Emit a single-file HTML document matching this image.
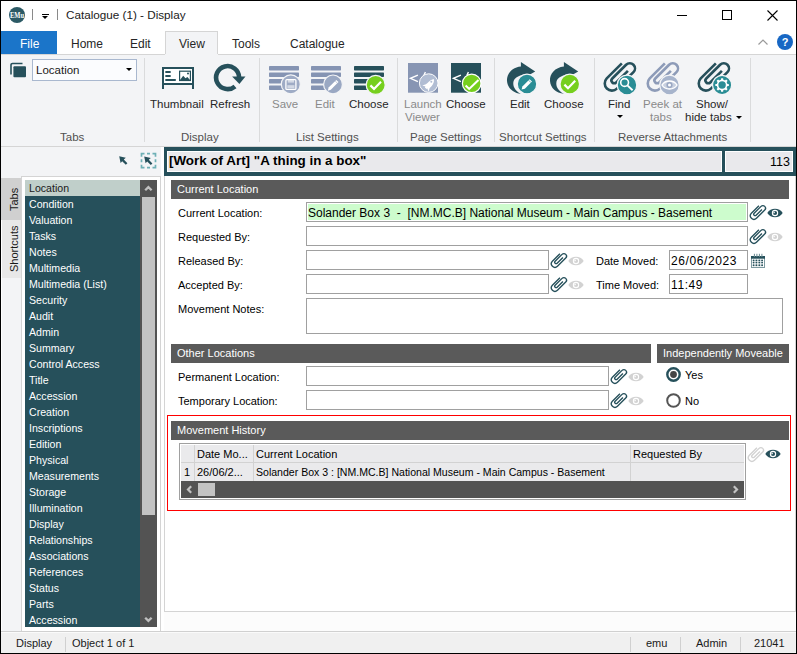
<!DOCTYPE html>
<html><head><meta charset="utf-8">
<style>
*{box-sizing:border-box;margin:0;padding:0}
html,body{width:797px;height:654px;overflow:hidden;background:#fff}
body{position:relative;font-family:"Liberation Sans",sans-serif;color:#000}
.a{position:absolute}
.t{position:absolute;white-space:nowrap;line-height:1}
#win{position:absolute;left:0;top:0;width:797px;height:654px;border:1px solid #000;}
.rb{font-size:11.5px;color:#262626}
.gl{font-size:11.5px;color:#505050}
.dis{color:#8a8a8a}
.sep{position:absolute;width:1px;background:#dadbdc;top:58px;height:84px}
.lst div{height:16px;line-height:16px;padding-left:4px;font-size:10.6px;color:#fff;white-space:nowrap}
.hdr{position:absolute;background:#5a5a5a;color:#fff;font-size:11px;height:19px;line-height:19px;padding-left:6px;white-space:nowrap}
.lbl{position:absolute;font-size:11px;white-space:nowrap;line-height:1;color:#000}
.inp{position:absolute;border:1px solid #a0a0a0;background:#fff;height:20px}
.inp span{position:absolute;left:1px;top:4px;font-size:12px;white-space:nowrap;line-height:1}
</style></head><body>
<div id="win"></div>

<svg width="0" height="0" style="position:absolute">
<defs>
<symbol id="clip" viewBox="0 0 40 40"><path d="M21.85 5.3L6.75 20.41A7.2 7.2 0 0 0 16.93 30.59L33.45 14.08A5.2 5.2 0 0 0 26.09 6.72L12.29 20.52A2.8 2.8 0 0 0 16.25 24.48L27.9 12.8" fill="none" stroke="currentColor" stroke-width="2.7" stroke-linecap="butt"/></symbol>
<symbol id="clips" viewBox="0 0 40 40"><path d="M21.85 5.3L6.75 20.41A7.2 7.2 0 0 0 16.93 30.59L33.45 14.08A5.2 5.2 0 0 0 26.09 6.72L12.29 20.52A2.8 2.8 0 0 0 16.25 24.48L27.9 12.8" fill="none" stroke="currentColor" stroke-width="2.6" stroke-linecap="butt"/></symbol>
<symbol id="eye" viewBox="0 0 16 10"><path d="M0.3 5C3.5 -0.6 12.5 -0.6 15.7 5C12.5 10.6 3.5 10.6 0.3 5Z" fill="currentColor"/><circle cx="8" cy="5" r="3.2" fill="#fff"/><circle cx="8" cy="5" r="2.1" fill="currentColor"/><path d="M8 5L8 3.3A1.7 1.7 0 0 0 6.3 5Z" fill="#fff" transform="rotate(-20 8 5)"/></symbol>
<symbol id="chk" viewBox="0 0 20 20"><circle cx="10" cy="10" r="9.4" fill="#76cf1e" stroke="#fff" stroke-width="1.2"/><path d="M4.3 11.6L8 15.2L15.8 7.2" fill="none" stroke="#fff" stroke-width="2.2"/></symbol>
</defs></svg>


<!-- TITLE BAR -->
<svg class="a" style="left:9px;top:7px" width="16" height="16" viewBox="0 0 16 16"><circle cx="8" cy="8" r="8" fill="#2c5a65"/><text x="1" y="10.8" font-family="Liberation Serif" font-weight="bold" font-size="7.6" fill="#fff" textLength="14" lengthAdjust="spacingAndGlyphs">EMu</text></svg>
<div class="a" style="left:32px;top:9px;width:1px;height:11px;background:#8a8a8a"></div>
<div class="a" style="left:42px;top:14px;width:7px;height:1px;background:#000"></div>
<div class="a" style="left:42px;top:16px;width:0;height:0;border-left:3.5px solid transparent;border-right:3.5px solid transparent;border-top:3.5px solid #000"></div>
<div class="a" style="left:57px;top:9px;width:1px;height:11px;background:#8a8a8a"></div>
<div class="t" style="left:66px;top:9px;font-size:11.7px;color:#1a1a1a">Catalogue (1) - Display</div>
<div class="a" style="left:677px;top:15px;width:10px;height:1px;background:#000"></div>
<div class="a" style="left:722px;top:10px;width:10px;height:10px;border:1px solid #000"></div>
<svg class="a" style="left:767px;top:10px" width="11" height="11" viewBox="0 0 11 11"><path d="M0.5 0.5L10.5 10.5M10.5 0.5L0.5 10.5" stroke="#000" stroke-width="1.1"/></svg>

<!-- TAB ROW -->
<div class="a" style="left:1px;top:31px;width:56px;height:23px;background:#1b75c9"></div>
<div class="t" style="left:20px;top:38px;font-size:12px;color:#fff">File</div>
<div class="t" style="left:71px;top:38px;font-size:12px;color:#262626">Home</div>
<div class="t" style="left:130px;top:38px;font-size:12px;color:#262626">Edit</div>
<div class="a" style="left:165px;top:31px;width:53px;height:24px;background:#f3f4f6;border:1px solid #d5d5d5;border-bottom:none"></div>
<div class="t" style="left:179px;top:38px;font-size:12px;color:#262626">View</div>
<div class="t" style="left:232px;top:38px;font-size:12px;color:#262626">Tools</div>
<div class="t" style="left:290px;top:38px;font-size:12px;color:#262626">Catalogue</div>
<svg class="a" style="left:758px;top:39px" width="10" height="6" viewBox="0 0 10 6"><path d="M0.5 5.5L5 1L9.5 5.5" stroke="#9a9a9a" stroke-width="1.2" fill="none"/></svg>
<div class="a" style="left:777px;top:34px;width:16px;height:16px;border-radius:50%;background:#1767c4"></div>
<div class="t" style="left:777px;top:37px;width:16px;text-align:center;font-size:11px;font-weight:bold;color:#fff">?</div>

<!-- RIBBON -->
<div class="a" style="left:1px;top:54px;width:795px;height:93px;background:#f3f4f6;border-top:1px solid #d5d5d5;border-bottom:1px solid #d5d5d5"></div>
<div class="a" style="left:165px;top:54px;width:53px;height:1px;background:#f3f4f6"></div>


<!-- Tabs group -->
<svg class="a" style="left:10px;top:62px" width="17" height="17" viewBox="0 0 17 17"><path d="M1 12.5V3A1.5 1.5 0 0 1 2.5 1.5H12.5" stroke="#26505b" stroke-width="1.6" fill="none"/><rect x="3.4" y="4.3" width="12.6" height="11" rx="1" fill="#26505b"/></svg>
<div class="a" style="left:32px;top:59px;width:105px;height:22px;background:#fbfcfe;border:1px solid #a9b8cf"></div>
<div class="t" style="left:36px;top:65px;font-size:11.5px;color:#1a1a1a">Location</div>
<div class="a" style="left:126px;top:68px;width:0;height:0;border-left:3.5px solid transparent;border-right:3.5px solid transparent;border-top:3.5px solid #000"></div>
<div class="t gl" style="left:60px;top:132px">Tabs</div>
<div class="sep" style="left:144px"></div>
<!-- Display group -->
<div class="t rb" style="left:150px;top:99px">Thumbnail</div>
<div class="t rb" style="left:210px;top:99px">Refresh</div>
<div class="t gl" style="left:181px;top:132px">Display</div>
<div class="sep" style="left:259px"></div>
<!-- List settings -->
<div class="t rb dis" style="left:272px;top:99px">Save</div>
<div class="t rb dis" style="left:315px;top:99px">Edit</div>
<div class="t rb" style="left:349px;top:99px">Choose</div>
<div class="t gl" style="left:296px;top:132px">List Settings</div>
<div class="sep" style="left:397px"></div>
<!-- Page settings -->
<div class="t rb dis" style="left:404px;top:99px">Launch</div>
<div class="t rb dis" style="left:405px;top:112px">Viewer</div>
<div class="t rb" style="left:446px;top:99px">Choose</div>
<div class="t gl" style="left:410px;top:132px">Page Settings</div>
<div class="sep" style="left:494px"></div>
<!-- Shortcut settings -->
<div class="t rb" style="left:510px;top:99px">Edit</div>
<div class="t rb" style="left:544px;top:99px">Choose</div>
<div class="t gl" style="left:499px;top:132px">Shortcut Settings</div>
<div class="sep" style="left:594px"></div>
<!-- Reverse attachments -->
<div class="t rb" style="left:608px;top:99px">Find</div>
<div class="a" style="left:617px;top:115px;width:0;height:0;border-left:3px solid transparent;border-right:3px solid transparent;border-top:3px solid #000"></div>
<div class="t rb dis" style="left:643px;top:99px">Peek at</div>
<div class="t rb dis" style="left:650px;top:112px">tabs</div>
<div class="t rb" style="left:696px;top:99px">Show/</div>
<div class="t rb" style="left:685px;top:112px">hide tabs</div>
<div class="a" style="left:736px;top:116px;width:0;height:0;border-left:3px solid transparent;border-right:3px solid transparent;border-top:3px solid #000"></div>
<div class="t gl" style="left:618px;top:132px">Reverse Attachments</div>
<div class="sep" style="left:750px"></div>


<!-- ribbon icons -->
<svg class="a" style="left:162px;top:67px" width="32" height="22" viewBox="0 0 32 22"><rect x="1" y="1" width="30" height="16" fill="#fff" stroke="#26505b" stroke-width="2"/><path d="M1 17V22M31 17V22" stroke="#26505b" stroke-width="2"/><rect x="3.2" y="4.1" width="5.6" height="1.8" rx=".6" fill="#26505b"/><rect x="3.2" y="8.1" width="5.6" height="1.8" rx=".6" fill="#26505b"/><rect x="3.2" y="12" width="10.7" height="1.9" rx=".6" fill="#26505b"/><rect x="17.6" y="4.2" width="10.8" height="9.3" fill="none" stroke="#26505b" stroke-width="1.2"/><path d="M17.6 13.5L21.2 8.8L23.5 11.2L25.4 10L28.4 13.5Z" fill="#26505b"/><circle cx="26" cy="6.6" r="1" fill="#26505b"/></svg>
<svg class="a" style="left:213px;top:63px" width="33" height="29" viewBox="0 0 33 29"><path d="M22 23.4A11.5 11.5 0 1 1 26.1 14.4" fill="none" stroke="#26505b" stroke-width="4.6"/><path d="M19.1 13.6L32.5 13.6L26.4 20.9Z" fill="#26505b"/></svg>
<svg class="a" style="left:269px;top:66px" width="34" height="30" viewBox="0 0 34 30"><rect x="0" y="0" width="30" height="4.4" rx="0.7" fill="#8594b3"/><rect x="0" y="6.5" width="30" height="4.4" rx="0.7" fill="#8594b3"/><rect x="0" y="13" width="30" height="4.4" rx="0.7" fill="#8594b3"/><rect x="0" y="19.5" width="30" height="4.4" rx="0.7" fill="#8594b3"/><circle cx="21.8" cy="18.3" r="9.5" fill="#9eabc5" stroke="#f3f4f6" stroke-width="1.2"/><rect x="16.9" y="13.6" width="10" height="9.8" rx="1" fill="none" stroke="#fff" stroke-width="1.3"/><rect x="18.8" y="13.3" width="6.2" height="3.3" fill="#fff" opacity=".55"/><rect x="18.3" y="19.2" width="7.2" height="3" fill="#fff" opacity=".55"/></svg><svg class="a" style="left:311px;top:66px" width="34" height="30" viewBox="0 0 34 30"><rect x="0" y="0" width="30" height="4.4" rx="0.7" fill="#8594b3"/><rect x="0" y="6.5" width="30" height="4.4" rx="0.7" fill="#8594b3"/><rect x="0" y="13" width="30" height="4.4" rx="0.7" fill="#8594b3"/><rect x="0" y="19.5" width="30" height="4.4" rx="0.7" fill="#8594b3"/><circle cx="22" cy="18.4" r="9.4" fill="#9aa8c3" stroke="#f3f4f6" stroke-width="1.2"/><path d="M16.8 24.7L17.6 21.6L25.3 13.9L27.5 16.1L19.8 23.8Z" fill="#fff"/><path d="M24.2 15L26.4 17.2" stroke="#9aa8c3" stroke-width=".6"/></svg><svg class="a" style="left:354px;top:66px" width="34" height="30" viewBox="0 0 34 30"><rect x="0" y="0" width="30" height="4.4" rx="0.7" fill="#26505b"/><rect x="0" y="6.5" width="30" height="4.4" rx="0.7" fill="#26505b"/><rect x="0" y="13" width="30" height="4.4" rx="0.7" fill="#26505b"/><rect x="0" y="19.5" width="30" height="4.4" rx="0.7" fill="#26505b"/><circle cx="21.7" cy="18.9" r="9.5" fill="#76cf1e" stroke="#f3f4f6" stroke-width="1.2"/><path d="M16.4 19.4L20 22.9L27 15.8" fill="none" stroke="#fff" stroke-width="2.2"/></svg>
<svg class="a" style="left:408px;top:63px" width="31" height="31" viewBox="0 0 31 31"><rect x="0" y="0" width="30" height="29.7" fill="#8795b3"/><path d="M9.9 12.1L2.4 15.3L9.9 18.7" fill="none" stroke="#fff" stroke-width="1.4"/><path d="M17.4 9L15.9 12.2" stroke="#fff" stroke-width="1.4"/><circle cx="20.7" cy="20.1" r="9.3" fill="#b1bdd3" stroke="#fff" stroke-width="1"/><path d="M25.8 16.1C24 16.4 21.5 18 19.5 20L17.9 21.3L14.3 22.4L17.4 23.6L16.9 24.4L18.6 26.1L19.4 25.6L20.5 28.7L21.7 25.1L23.3 23.5C25.3 21.5 26.5 18.5 25.8 16.1Z" fill="#fff"/><circle cx="23.3" cy="18.8" r="1" fill="#b1bdd3"/></svg>
<svg class="a" style="left:451px;top:63px" width="31" height="31" viewBox="0 0 31 31"><rect x="0" y="0" width="30" height="29.7" fill="#26505b"/><path d="M9.9 12.1L2.4 15.3L9.9 18.7" fill="none" stroke="#fff" stroke-width="1.4"/><path d="M17.4 9L15.9 12.2" stroke="#fff" stroke-width="1.4"/><circle cx="20.7" cy="20.4" r="9.3" fill="#76cf1e" stroke="#fff" stroke-width="1.2"/><path d="M14.6 22.6L18.2 25.9L27.5 17.1" fill="none" stroke="#fff" stroke-width="2.1"/></svg>

<svg class="a" style="left:503px;top:58px" width="38" height="39" viewBox="0 0 38 39"><path d="M32.2 13.4L17.9 4.1L17.9 8.6C9 9.5 3.5 16 4 23C4.5 30 10 35 18 35.8C12 33 9.5 28 10.5 23.5C11.5 19 17 16.2 27 16.4Z" fill="#26505b"/><circle cx="24" cy="26" r="9.8" fill="#2a8d95" stroke="#f3f4f6" stroke-width="1.3"/><path d="M18.6 31.6L19.4 28.4L26.6 21.2L29 23.6L21.8 30.8Z" fill="#fff"/><path d="M25.6 22.2L28 24.6" stroke="#2a8d95" stroke-width=".7"/></svg>
<svg class="a" style="left:546px;top:58px" width="38" height="39" viewBox="0 0 38 39"><path d="M32.2 13.4L17.9 4.1L17.9 8.6C9 9.5 3.5 16 4 23C4.5 30 10 35 18 35.8C12 33 9.5 28 10.5 23.5C11.5 19 17 16.2 27 16.4Z" fill="#26505b"/><circle cx="23.8" cy="26" r="9.8" fill="#76cf1e" stroke="#f3f4f6" stroke-width="1.3"/><path d="M18.4 26.6L22 30.2L29.2 22.8" fill="none" stroke="#fff" stroke-width="2.2"/></svg>

<svg class="a" style="left:600px;top:58px;color:#26505b" width="40" height="40"><use href="#clips"/><circle cx="27" cy="27" r="9.8" fill="#2a8d95" stroke="#f3f4f6" stroke-width="1.3"/><circle cx="24.6" cy="24.5" r="3.9" fill="none" stroke="#fff" stroke-width="1.6"/><path d="M27.4 27.4L32.6 32.3" stroke="#fff" stroke-width="1.9"/></svg>
<svg class="a" style="left:643px;top:58px;color:#8d9bb8" width="40" height="40"><use href="#clips"/><circle cx="26.5" cy="27" r="9.8" fill="#a7b4cc" stroke="#f3f4f6" stroke-width="1.3"/><path d="M19 27C22.3 21.6 30.7 21.6 34 27C30.7 32.4 22.3 32.4 19 27Z" fill="#c9d1e0" stroke="#fff" stroke-width="1.4"/><circle cx="26.5" cy="27" r="3.1" fill="#9aa8c3"/><circle cx="26.5" cy="27" r="1.5" fill="#fff"/></svg>
<svg class="a" style="left:694px;top:58px;color:#26505b" width="40" height="40"><use href="#clips"/><circle cx="28.1" cy="27" r="9.6" fill="#2a8d95" stroke="#f3f4f6" stroke-width="1.3"/><g fill="#fff"><circle cx="28.1" cy="27" r="5.4"/><rect x="27" y="20.2" width="2.2" height="13.6" rx=".5"/><rect x="27" y="20.2" width="2.2" height="13.6" rx=".5" transform="rotate(45 28.1 27)"/><rect x="27" y="20.2" width="2.2" height="13.6" rx=".5" transform="rotate(90 28.1 27)"/><rect x="27" y="20.2" width="2.2" height="13.6" rx=".5" transform="rotate(135 28.1 27)"/></g><circle cx="28.1" cy="27" r="3.7" fill="#2a8d95"/></svg>

<!-- below ribbon: left panel bg -->
<div class="a" style="left:1px;top:147px;width:160px;height:484px;background:#f3f4f6"></div>
<!-- content bg -->
<div class="a" style="left:164px;top:147px;width:632px;height:484px;background:#fff"></div>


<!-- SIDEBAR -->
<svg class="a" style="left:114px;top:150px" width="46" height="22" viewBox="0 0 46 22"><path d="M5.2 6.2L11.8 7.800000000000001L9.8 9.6L13.399999999999999 13.2L11.8 14.8L8.2 11.2L6.6 13.0Z" fill="#26505b"/><path d="M27.5 3.7H41.5V17.7H27.5Z" fill="none" stroke="#6fb0b6" stroke-width="1.7" stroke-dasharray="6 2.5 3 2.5" stroke-dashoffset="3"/><path d="M30.2 6.4L36.8 8.0L34.8 9.8L38.4 13.4L36.8 15.0L33.2 11.4L31.599999999999998 13.2Z" fill="#26505b"/></svg>
<div class="a" style="left:1px;top:220px;width:1px;height:411px;background:#fff"></div>
<div class="a" style="left:1px;top:178px;width:21px;height:42px;background:#d0d0d0"></div>
<div class="a" style="left:2px;top:220px;width:19px;height:58px;background:#e8e8e8"></div>
<div class="t" style="left:8.5px;top:210.5px;font-size:11px;color:#1a1a1a;transform:rotate(-90deg);transform-origin:0 0">Tabs</div>
<div class="t" style="left:8.5px;top:272px;font-size:11px;color:#1a1a1a;transform:rotate(-90deg);transform-origin:0 0">Shortcuts</div>
<div class="a" style="left:21px;top:176px;width:140px;height:455px;background:#fff;border:1px solid #d4d4d4;border-bottom:none"></div>
<div class="a lst" style="left:25px;top:180px;width:115px;height:447px;background:#26505b;overflow:hidden"><div style="background:#c0cfca;color:#1a1a1a">Location</div><div>Condition</div><div>Valuation</div><div>Tasks</div><div>Notes</div><div>Multimedia</div><div>Multimedia (List)</div><div>Security</div><div>Audit</div><div>Admin</div><div>Summary</div><div>Control Access</div><div>Title</div><div>Accession</div><div>Creation</div><div>Inscriptions</div><div>Edition</div><div>Physical</div><div>Measurements</div><div>Storage</div><div>Illumination</div><div>Display</div><div>Relationships</div><div>Associations</div><div>References</div><div>Status</div><div>Parts</div><div>Accession</div></div>
<div class="a" style="left:140px;top:180px;width:17px;height:447px;background:#535353"></div>
<div class="a" style="left:142px;top:197px;width:13px;height:318px;background:#c3c3c3"></div>
<svg class="a" style="left:144px;top:185px" width="9" height="7" viewBox="0 0 9 7"><path d="M1.2 5.3L4.4 2.1L7.6 5.3" fill="none" stroke="#c0c0c0" stroke-width="2.3"/></svg>
<svg class="a" style="left:144px;top:616px" width="9" height="7" viewBox="0 0 9 7"><path d="M1.2 1.7L4.4 4.9L7.6 1.7" fill="none" stroke="#c0c0c0" stroke-width="2.3"/></svg>


<!-- CONTENT -->
<div class="a" style="left:164px;top:611px;width:632px;height:20px;background:#fcfcfc"></div>
<div class="a" style="left:164px;top:176px;width:632px;height:436px;border:1px solid #d4d4d4;border-top:none"></div>
<div class="a" style="left:164px;top:147px;width:632px;height:29px;background:#26505b"></div>
<div class="a" style="left:167px;top:151px;width:555px;height:21px;background:#e9e9ec;border:1px solid #fff"></div>
<div class="a" style="left:725px;top:151px;width:68px;height:21px;background:#e9e9ec;border:1px solid #fff"></div>
<div class="t" style="left:169px;top:154px;font-size:13.4px;font-weight:bold;color:#000">[Work of Art] "A thing in a box"</div>
<div class="t" style="left:740px;top:156px;width:50px;text-align:right;font-size:12.5px;color:#000">113</div>

<div class="hdr" style="left:171px;top:180px;width:618px">Current Location</div>
<div class="lbl" style="left:178px;top:208px">Current Location:</div>
<div class="lbl" style="left:178px;top:232px">Requested By:</div>
<div class="lbl" style="left:178px;top:256px">Released By:</div>
<div class="lbl" style="left:178px;top:280px">Accepted By:</div>
<div class="lbl" style="left:178px;top:304px">Movement Notes:</div>
<div class="inp" style="left:306px;top:202px;width:442px;background:#cdfccd;box-shadow:inset 0 0 0 1px #fff"><span>Solander Box 3&nbsp; - &nbsp;[NM.MC.B] National Museum - Main Campus - Basement</span></div>
<div class="inp" style="left:306px;top:226px;width:442px"></div>
<div class="inp" style="left:306px;top:250px;width:243px"></div>
<div class="inp" style="left:306px;top:274px;width:243px"></div>
<div class="inp" style="left:306px;top:298px;width:477px;height:36px"></div>
<div class="lbl" style="left:596px;top:256px">Date Moved:</div>
<div class="lbl" style="left:596px;top:280px">Time Moved:</div>
<div class="inp" style="left:669px;top:250px;width:79px"><span style="letter-spacing:0.6px">26/06/2023</span></div>
<div class="inp" style="left:669px;top:274px;width:79px"><span style="letter-spacing:0.6px">11:49</span></div>

<div class="hdr" style="left:171px;top:344px;width:480px">Other Locations</div>
<div class="hdr" style="left:657px;top:344px;width:132px">Independently Moveable</div>
<div class="lbl" style="left:178px;top:372px">Permanent Location:</div>
<div class="lbl" style="left:178px;top:396px">Temporary Location:</div>
<div class="inp" style="left:306px;top:366px;width:303px"></div>
<div class="inp" style="left:306px;top:390px;width:303px"></div>
<svg class="a" style="left:666px;top:367px" width="15" height="15" viewBox="0 0 15 15"><circle cx="7.5" cy="7.5" r="6.2" fill="#fff" stroke="#26505b" stroke-width="2.4"/><circle cx="7.5" cy="7.5" r="3.4" fill="#444"/></svg>
<div class="lbl" style="left:685px;top:370px">Yes</div>
<svg class="a" style="left:666px;top:393px" width="15" height="15" viewBox="0 0 15 15"><circle cx="7.5" cy="7.5" r="6.3" fill="#fff" stroke="#555" stroke-width="2"/></svg>
<div class="lbl" style="left:685px;top:396px">No</div>

<div class="a" style="left:167px;top:415px;width:624px;height:96px;border:1px solid #ff0000"></div>
<div class="hdr" style="left:171px;top:421px;width:618px">Movement History</div>
<div class="a" style="left:179px;top:443px;width:567px;height:57px;border:1px solid #a0a0a0;background:#fff"></div>
<div class="a" style="left:181px;top:445px;width:563px;height:36px;background:#eaeaec"></div>
<div class="a" style="left:181px;top:462px;width:563px;height:1px;background:#d2d2d2"></div>
<div class="a" style="left:194px;top:445px;width:1px;height:36px;background:#d2d2d2"></div>
<div class="a" style="left:253px;top:445px;width:1px;height:36px;background:#d2d2d2"></div>
<div class="a" style="left:630px;top:445px;width:1px;height:36px;background:#d2d2d2"></div>
<div class="lbl" style="left:197px;top:449px">Date Mo...</div>
<div class="lbl" style="left:256px;top:449px">Current Location</div>
<div class="lbl" style="left:633px;top:449px">Requested By</div>
<div class="lbl" style="left:184px;top:467px">1</div>
<div class="lbl" style="left:197px;top:467px">26/06/2...</div>
<div class="lbl" style="left:256px;top:467px;font-size:10.55px">Solander Box 3 : [NM.MC.B] National Museum - Main Campus - Basement</div>
<div class="a" style="left:181px;top:481px;width:563px;height:17px;background:#535353"></div>
<div class="a" style="left:198px;top:483px;width:17px;height:13px;background:#c3c3c3"></div>
<svg class="a" style="left:186px;top:485px" width="7" height="9" viewBox="0 0 7 9"><path d="M5.2 1.2L2 4.5L5.2 7.8" fill="none" stroke="#c4c4c4" stroke-width="2.2"/></svg>
<svg class="a" style="left:732px;top:485px" width="7" height="9" viewBox="0 0 7 9"><path d="M1.8 1.2L5 4.5L1.8 7.8" fill="none" stroke="#c4c4c4" stroke-width="2.2"/></svg>

<!-- small clip/eye icons -->
<svg class="a" style="left:748px;top:203px;color:#26505b" width="20" height="20"><use href="#clip"/></svg>
<svg class="a" style="left:767px;top:208px;color:#26505b" width="16" height="10"><use href="#eye"/></svg>
<svg class="a" style="left:748px;top:227px;color:#26505b" width="20" height="20"><use href="#clip"/></svg>
<svg class="a" style="left:767px;top:232px;color:#d2d2d2" width="16" height="10"><use href="#eye"/></svg>
<svg class="a" style="left:549px;top:251px;color:#26505b" width="20" height="20"><use href="#clip"/></svg>
<svg class="a" style="left:568px;top:256px;color:#d2d2d2" width="16" height="10"><use href="#eye"/></svg>
<svg class="a" style="left:549px;top:275px;color:#26505b" width="20" height="20"><use href="#clip"/></svg>
<svg class="a" style="left:568px;top:280px;color:#d2d2d2" width="16" height="10"><use href="#eye"/></svg>
<svg class="a" style="left:609px;top:367px;color:#26505b" width="20" height="20"><use href="#clip"/></svg>
<svg class="a" style="left:628px;top:372px;color:#d2d2d2" width="16" height="10"><use href="#eye"/></svg>
<svg class="a" style="left:609px;top:391px;color:#26505b" width="20" height="20"><use href="#clip"/></svg>
<svg class="a" style="left:628px;top:396px;color:#d2d2d2" width="16" height="10"><use href="#eye"/></svg>
<svg class="a" style="left:746px;top:445px;color:#d2d2d2" width="20" height="20"><use href="#clip"/></svg>
<svg class="a" style="left:765px;top:449px;color:#26505b" width="16" height="10"><use href="#eye"/></svg>
<!-- calendar -->
<svg class="a" style="left:750px;top:253px" width="16" height="16" viewBox="0 0 16 16"><rect x="1.5" y="4" width="13" height="10.5" fill="#fff" stroke="#7e9ba1" stroke-width="1"/><rect x="1" y="3" width="14" height="2.7" fill="#26505b"/><path d="M4.4 0.8V4M6.9 0.8V4M9.4 0.8V4M11.9 0.8V4" stroke="#6a8b92" stroke-width="1"/><path d="M5 6V14M7.9 6V14M10.7 6V14" stroke="#dfe7e8" stroke-width=".8"/><g fill="#26505b"><circle cx="3.6" cy="7.4" r="0.95"/><circle cx="6.4" cy="7.4" r="0.95"/><circle cx="9.3" cy="7.4" r="0.95"/><circle cx="12.1" cy="7.4" r="0.95"/><circle cx="3.6" cy="9.6" r="0.95"/><circle cx="6.4" cy="9.6" r="0.95"/><circle cx="9.3" cy="9.6" r="0.95"/><circle cx="12.1" cy="9.6" r="0.95"/><circle cx="3.6" cy="12.3" r="0.95"/><circle cx="6.4" cy="12.3" r="0.95"/><circle cx="9.3" cy="12.3" r="0.95"/><circle cx="12.1" cy="12.3" r="0.95"/></g></svg>

<!-- STATUS BAR -->

<div class="a" style="left:1px;top:631px;width:795px;height:22px;background:#f0f0f0;border-top:1px solid #d0d0d0"></div>
<div class="a" style="left:1px;top:632px;width:795px;height:1px;background:#fafafa"></div>
<div class="t" style="left:16px;top:638px;font-size:11px;color:#1a1a1a">Display</div>
<div class="a" style="left:65px;top:637px;width:1px;height:15px;background:#d0d0d0"></div>
<div class="t" style="left:72px;top:638px;font-size:11px;color:#1a1a1a">Object 1 of 1</div>
<div class="a" style="left:630px;top:637px;width:1px;height:15px;background:#d0d0d0"></div>
<div class="t" style="left:646px;top:638px;font-size:11px;color:#1a1a1a">emu</div>
<div class="a" style="left:680px;top:637px;width:1px;height:15px;background:#d0d0d0"></div>
<div class="t" style="left:696px;top:638px;font-size:11px;color:#1a1a1a">Admin</div>
<div class="a" style="left:740px;top:637px;width:1px;height:15px;background:#d0d0d0"></div>
<div class="t" style="left:754px;top:638px;font-size:11px;color:#1a1a1a">21041</div>

</body></html>
